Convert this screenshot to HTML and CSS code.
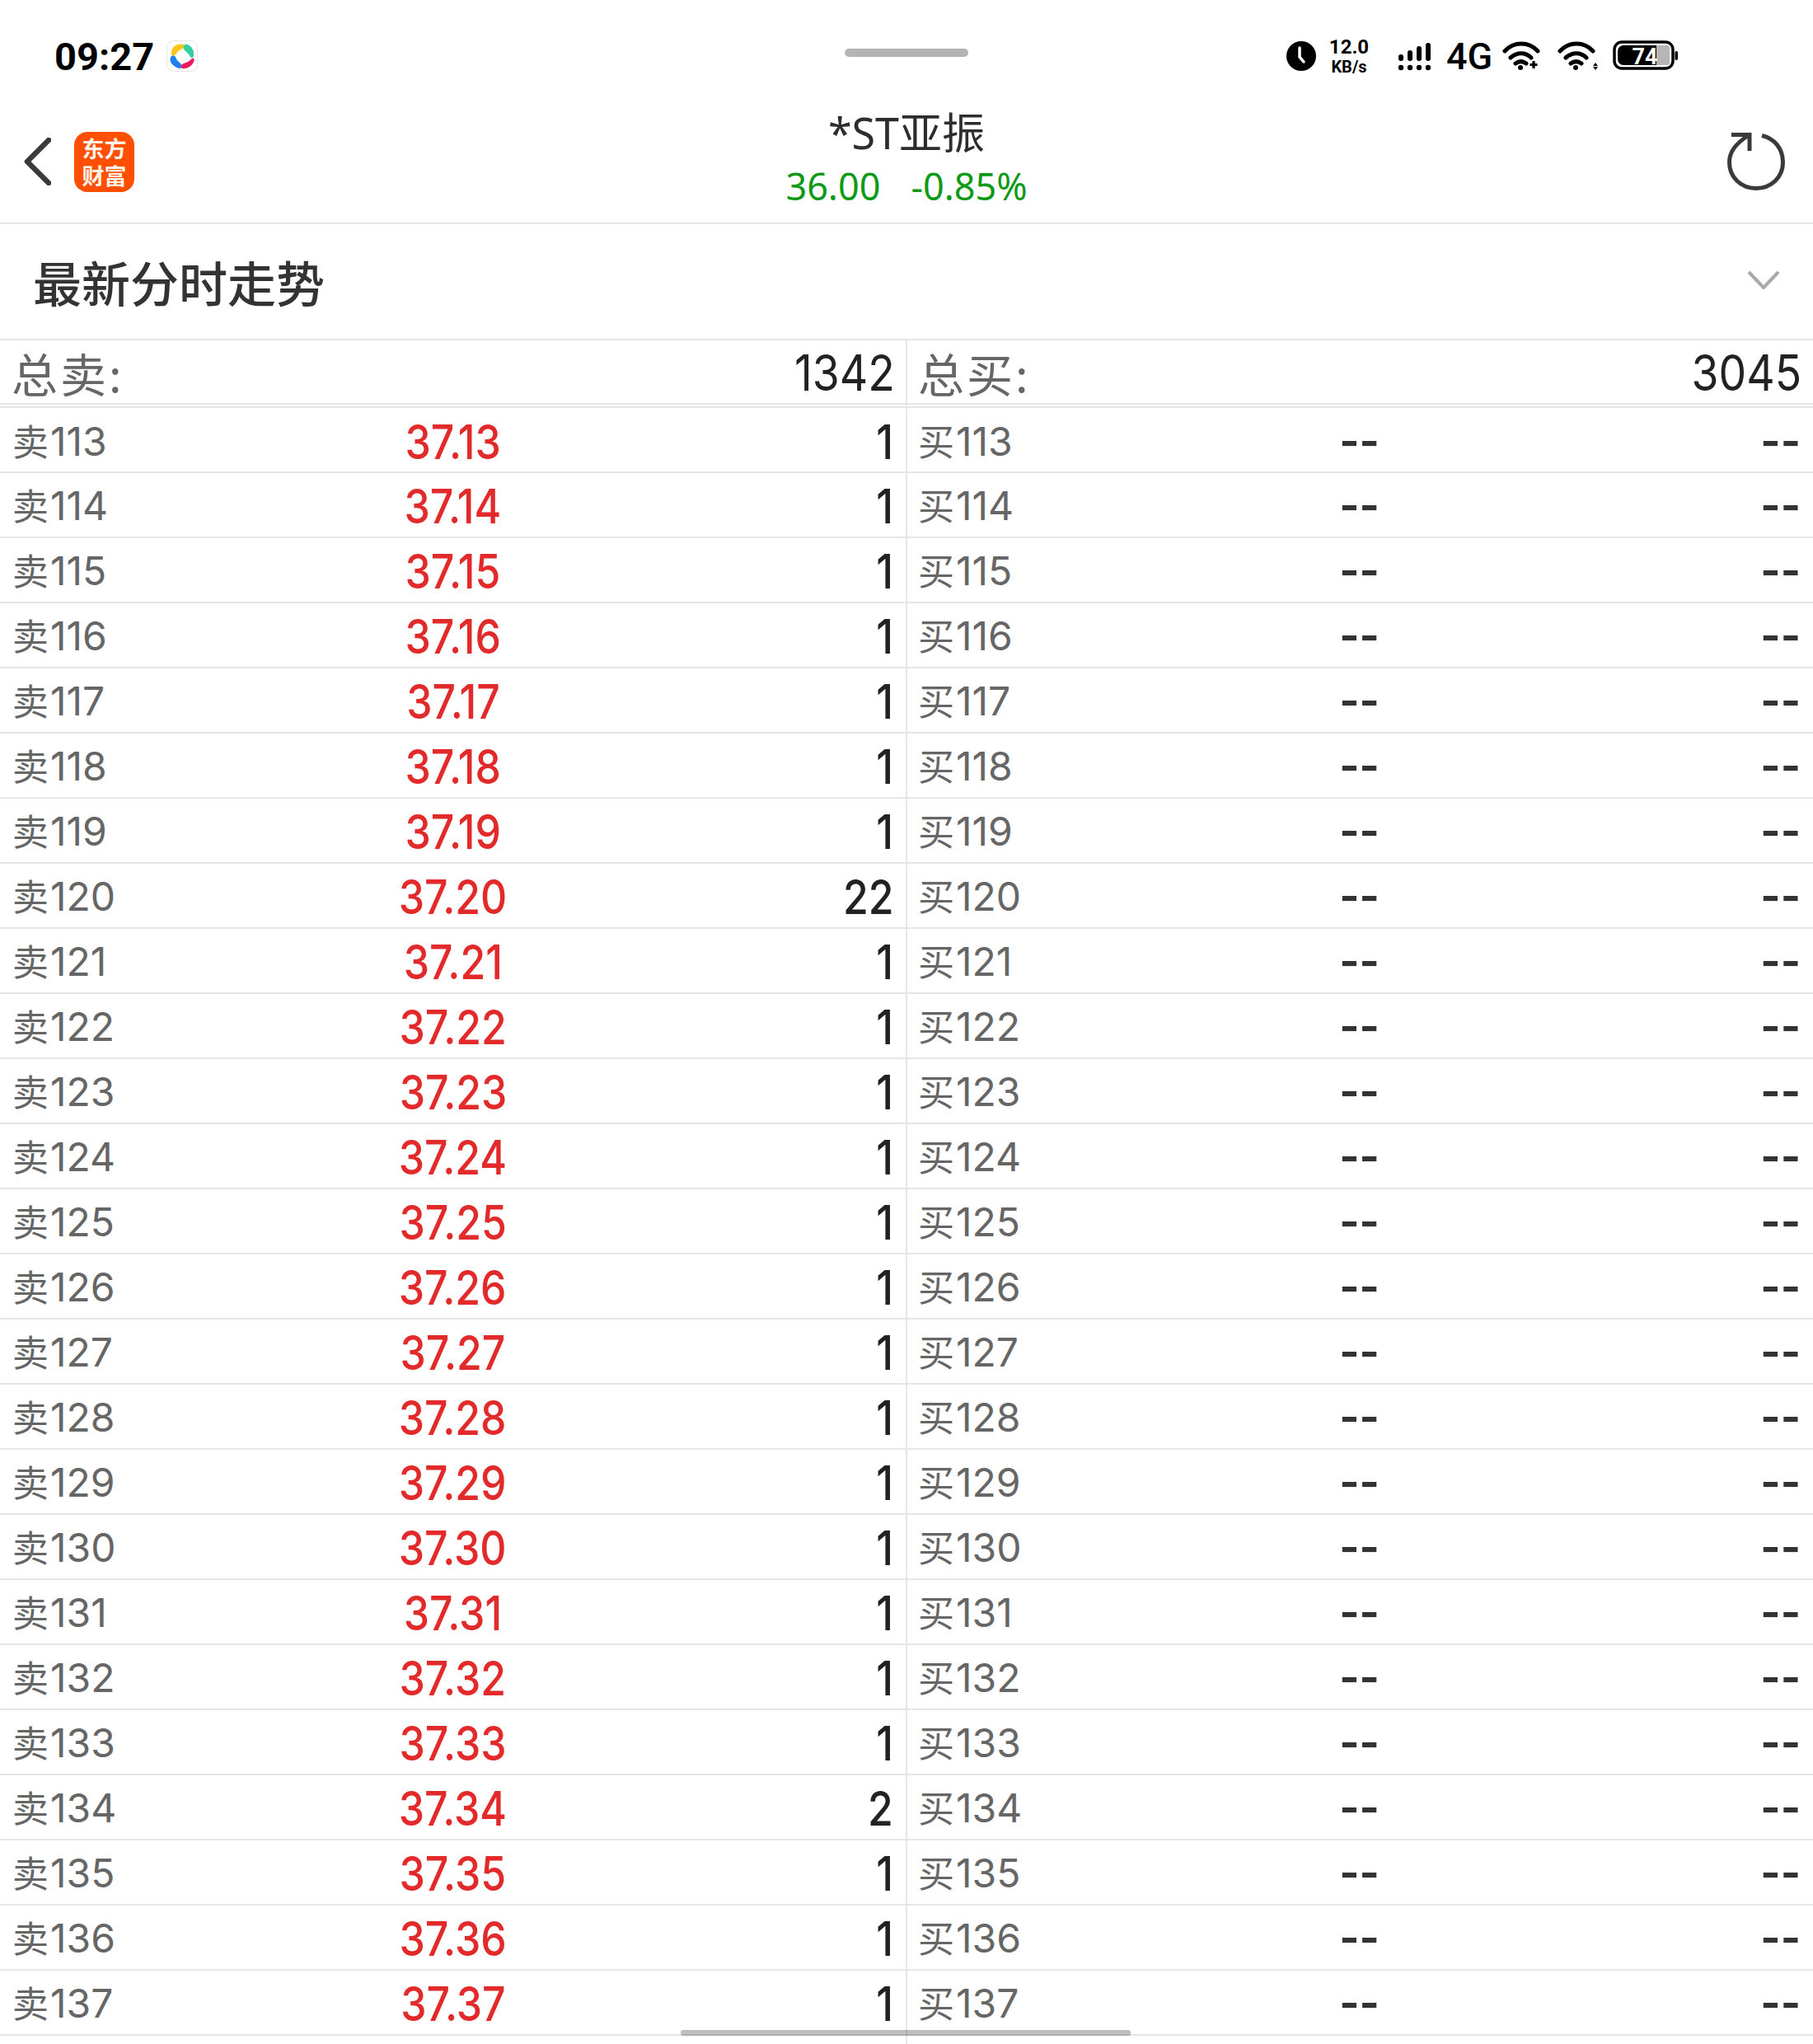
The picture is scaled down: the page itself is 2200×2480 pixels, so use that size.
FILE: index.html
```html
<!DOCTYPE html>
<html lang="zh-CN">
<head>
<meta charset="utf-8">
<title>*ST亚振</title>
<link rel="stylesheet" href="styles.css">
</head>
<body>
<div class="page">
  <header class="status">
    <div class="status-left">
      <span class="time">09:27</span>
      <svg class="appicon" viewBox="0 0 38 38"><rect x=".5" y=".5" width="37" height="37" rx="8" fill="#fff" stroke="#e6e6e6"/><path d="M6 17C5 9 12 3 21 5c2 1 1 4-1 5-4 1-6 3-9 7-2 2-5 2-5 0z" fill="#fbc51c"/><path d="M25 5c5 1 9 7 8 14 0 2-3 3-4 1-2-4-4-5-7-8-3-3-1-8 3-7z" fill="#36cfa4"/><path d="M5 21c1-3 4-3 6-1 1 4 3 5 6 8 3 3 1 7-2 6C9 32 3 27 5 21z" fill="#1f7ff0"/><path d="M31 22c3-1 3 2 2 4-2 5-8 9-14 8-3-2-1-5 2-6 4-1 7-3 10-6z" fill="#f0195f"/></svg>
    </div>
    <div class="handle"></div>
    <div class="status-right">
      <svg class="i-clock" viewBox="0 0 36 36"><circle cx="18" cy="18" r="18" fill="#000"/><path d="M16 8v11l5 6" fill="none" stroke="#fff" stroke-width="3.5" stroke-linecap="round"/></svg>
      <div class="speed"><span class="speed-a">12.0</span><span class="speed-b">KB/s</span></div>
      <svg class="i-signal" viewBox="0 0 40 34" fill="#000"><g stroke="#000" stroke-width="6" stroke-linecap="round"><path d="M4 17v2M15 12v7M26 7v12M37 3v16"/></g><circle cx="4" cy="30" r="3.2"/><circle cx="15" cy="30" r="3.2"/><circle cx="26" cy="30" r="3.2"/><circle cx="37" cy="30" r="3.2"/></svg>
      <span class="net">4G</span>
      <svg class="i-wifi" viewBox="0 0 46 36" fill="none" stroke="#000" stroke-width="5" stroke-linecap="round"><path d="M3 13c11-12 29-12 40 0M10 21c8-7 18-7 25 0M16 28c4-3 9-3 13 0"/><circle cx="22" cy="33" r="3" fill="#000" stroke="none"/><path d="M38 25v9M33.500 29.500h9" stroke-width="3.200" stroke-linecap="butt"/></svg>
      <svg class="i-wifi2" viewBox="0 0 49 36" fill="none" stroke="#000" stroke-width="5" stroke-linecap="round"><path d="M3 13c11-12 29-12 40 0M10 21c8-7 18-7 25 0M16 28c4-3 9-3 13 0"/><circle cx="22" cy="33" r="3" fill="#000" stroke="none"/><path d="M46 27l3 4h-6zM46 36l3-4h-6z" fill="#000" stroke="none"/></svg>
      <svg class="i-batt" viewBox="0 0 79 36"><rect x="2" y="2" width="71" height="32" rx="9" fill="#fff" stroke="#000" stroke-width="3.500"/><path d="M13 6h40v24H13a7 7 0 0 1-7-7V13a7 7 0 0 1 7-7z" fill="#000"/><path d="M53 6h13a3 3 0 0 1 3 3v18a3 3 0 0 1-3 3H53z" fill="#b6b6b6"/><rect x="75.500" y="13" width="3.500" height="11" rx="1.700" fill="#000"/><text x="39" y="28.500" class="batt-text">74</text></svg>
    </div>
  </header>

  <nav class="nav">
    <div class="nav-left">
      <svg class="back" viewBox="0 0 33 58" fill="none"><path d="M30 3L4 29l26 26" stroke="#3a3a3a" stroke-width="6.500" stroke-linecap="round" stroke-linejoin="round"/></svg>
      <div class="logo"><span>东方</span><span>财富</span></div>
    </div>
    <div class="nav-title">
      <div class="stock">*ST亚振</div>
      <div class="quote"><span>36.00</span><span>-0.85%</span></div>
    </div>
    <svg class="refresh" viewBox="0 0 70 70" fill="none" stroke="#3a3a3a" stroke-width="5"><path d="M42 3.500C57 7 67.500 19 67.500 36c0 18-14 31.500-32.500 31.500S2.500 54 2.500 36C2.500 24 9 14 26 3"/><path d="M5 2.500h22V22"/></svg>
  </nav>

  <section class="section">
    <h2 class="section-title">最新分时走势</h2>
    <svg class="down" viewBox="0 0 40 23" fill="none"><path d="M2 2l18 19L38 2" stroke="#a9a9a9" stroke-width="4"/></svg>
  </section>

  <main class="book">
    <div class="side side-sell">
      <div class="head"><span class="head-l">总卖:</span><span class="head-n"><b class="n-h">1342</b></span></div>
      <div class="row"><span class="l">卖<b class="d">113</b></span><span class="p red"><b class="n">37.13</b></span><span class="q"><b class="n n-r">1</b></span></div>
      <div class="row"><span class="l">卖<b class="d">114</b></span><span class="p red"><b class="n">37.14</b></span><span class="q"><b class="n n-r">1</b></span></div>
      <div class="row"><span class="l">卖<b class="d">115</b></span><span class="p red"><b class="n">37.15</b></span><span class="q"><b class="n n-r">1</b></span></div>
      <div class="row"><span class="l">卖<b class="d">116</b></span><span class="p red"><b class="n">37.16</b></span><span class="q"><b class="n n-r">1</b></span></div>
      <div class="row"><span class="l">卖<b class="d">117</b></span><span class="p red"><b class="n">37.17</b></span><span class="q"><b class="n n-r">1</b></span></div>
      <div class="row"><span class="l">卖<b class="d">118</b></span><span class="p red"><b class="n">37.18</b></span><span class="q"><b class="n n-r">1</b></span></div>
      <div class="row"><span class="l">卖<b class="d">119</b></span><span class="p red"><b class="n">37.19</b></span><span class="q"><b class="n n-r">1</b></span></div>
      <div class="row"><span class="l">卖<b class="d">120</b></span><span class="p red"><b class="n">37.20</b></span><span class="q"><b class="n n-r">22</b></span></div>
      <div class="row"><span class="l">卖<b class="d">121</b></span><span class="p red"><b class="n">37.21</b></span><span class="q"><b class="n n-r">1</b></span></div>
      <div class="row"><span class="l">卖<b class="d">122</b></span><span class="p red"><b class="n">37.22</b></span><span class="q"><b class="n n-r">1</b></span></div>
      <div class="row"><span class="l">卖<b class="d">123</b></span><span class="p red"><b class="n">37.23</b></span><span class="q"><b class="n n-r">1</b></span></div>
      <div class="row"><span class="l">卖<b class="d">124</b></span><span class="p red"><b class="n">37.24</b></span><span class="q"><b class="n n-r">1</b></span></div>
      <div class="row"><span class="l">卖<b class="d">125</b></span><span class="p red"><b class="n">37.25</b></span><span class="q"><b class="n n-r">1</b></span></div>
      <div class="row"><span class="l">卖<b class="d">126</b></span><span class="p red"><b class="n">37.26</b></span><span class="q"><b class="n n-r">1</b></span></div>
      <div class="row"><span class="l">卖<b class="d">127</b></span><span class="p red"><b class="n">37.27</b></span><span class="q"><b class="n n-r">1</b></span></div>
      <div class="row"><span class="l">卖<b class="d">128</b></span><span class="p red"><b class="n">37.28</b></span><span class="q"><b class="n n-r">1</b></span></div>
      <div class="row"><span class="l">卖<b class="d">129</b></span><span class="p red"><b class="n">37.29</b></span><span class="q"><b class="n n-r">1</b></span></div>
      <div class="row"><span class="l">卖<b class="d">130</b></span><span class="p red"><b class="n">37.30</b></span><span class="q"><b class="n n-r">1</b></span></div>
      <div class="row"><span class="l">卖<b class="d">131</b></span><span class="p red"><b class="n">37.31</b></span><span class="q"><b class="n n-r">1</b></span></div>
      <div class="row"><span class="l">卖<b class="d">132</b></span><span class="p red"><b class="n">37.32</b></span><span class="q"><b class="n n-r">1</b></span></div>
      <div class="row"><span class="l">卖<b class="d">133</b></span><span class="p red"><b class="n">37.33</b></span><span class="q"><b class="n n-r">1</b></span></div>
      <div class="row"><span class="l">卖<b class="d">134</b></span><span class="p red"><b class="n">37.34</b></span><span class="q"><b class="n n-r">2</b></span></div>
      <div class="row"><span class="l">卖<b class="d">135</b></span><span class="p red"><b class="n">37.35</b></span><span class="q"><b class="n n-r">1</b></span></div>
      <div class="row"><span class="l">卖<b class="d">136</b></span><span class="p red"><b class="n">37.36</b></span><span class="q"><b class="n n-r">1</b></span></div>
      <div class="row"><span class="l">卖<b class="d">137</b></span><span class="p red"><b class="n">37.37</b></span><span class="q"><b class="n n-r">1</b></span></div>
    </div>
    <div class="side side-buy">
      <div class="head"><span class="head-l">总买:</span><span class="head-n"><b class="n-h">3045</b></span></div>
      <div class="row"><span class="l">买<b class="d">113</b></span><span class="p dash">--</span><span class="q dash">--</span></div>
      <div class="row"><span class="l">买<b class="d">114</b></span><span class="p dash">--</span><span class="q dash">--</span></div>
      <div class="row"><span class="l">买<b class="d">115</b></span><span class="p dash">--</span><span class="q dash">--</span></div>
      <div class="row"><span class="l">买<b class="d">116</b></span><span class="p dash">--</span><span class="q dash">--</span></div>
      <div class="row"><span class="l">买<b class="d">117</b></span><span class="p dash">--</span><span class="q dash">--</span></div>
      <div class="row"><span class="l">买<b class="d">118</b></span><span class="p dash">--</span><span class="q dash">--</span></div>
      <div class="row"><span class="l">买<b class="d">119</b></span><span class="p dash">--</span><span class="q dash">--</span></div>
      <div class="row"><span class="l">买<b class="d">120</b></span><span class="p dash">--</span><span class="q dash">--</span></div>
      <div class="row"><span class="l">买<b class="d">121</b></span><span class="p dash">--</span><span class="q dash">--</span></div>
      <div class="row"><span class="l">买<b class="d">122</b></span><span class="p dash">--</span><span class="q dash">--</span></div>
      <div class="row"><span class="l">买<b class="d">123</b></span><span class="p dash">--</span><span class="q dash">--</span></div>
      <div class="row"><span class="l">买<b class="d">124</b></span><span class="p dash">--</span><span class="q dash">--</span></div>
      <div class="row"><span class="l">买<b class="d">125</b></span><span class="p dash">--</span><span class="q dash">--</span></div>
      <div class="row"><span class="l">买<b class="d">126</b></span><span class="p dash">--</span><span class="q dash">--</span></div>
      <div class="row"><span class="l">买<b class="d">127</b></span><span class="p dash">--</span><span class="q dash">--</span></div>
      <div class="row"><span class="l">买<b class="d">128</b></span><span class="p dash">--</span><span class="q dash">--</span></div>
      <div class="row"><span class="l">买<b class="d">129</b></span><span class="p dash">--</span><span class="q dash">--</span></div>
      <div class="row"><span class="l">买<b class="d">130</b></span><span class="p dash">--</span><span class="q dash">--</span></div>
      <div class="row"><span class="l">买<b class="d">131</b></span><span class="p dash">--</span><span class="q dash">--</span></div>
      <div class="row"><span class="l">买<b class="d">132</b></span><span class="p dash">--</span><span class="q dash">--</span></div>
      <div class="row"><span class="l">买<b class="d">133</b></span><span class="p dash">--</span><span class="q dash">--</span></div>
      <div class="row"><span class="l">买<b class="d">134</b></span><span class="p dash">--</span><span class="q dash">--</span></div>
      <div class="row"><span class="l">买<b class="d">135</b></span><span class="p dash">--</span><span class="q dash">--</span></div>
      <div class="row"><span class="l">买<b class="d">136</b></span><span class="p dash">--</span><span class="q dash">--</span></div>
      <div class="row"><span class="l">买<b class="d">137</b></span><span class="p dash">--</span><span class="q dash">--</span></div>
    </div>
  </main>
  <div class="scrollbar"></div>
</div>
</body>
</html>
```
FILE: styles.css
```css
* { box-sizing: border-box; }
html, body { margin: 0; padding: 0; background: #fff; }
.page {
  position: relative;
  width: 2200px;
  height: 2480px;
  overflow: hidden;
  display: flex;
  flex-direction: column;
  font-family: "Inter", "Noto Sans CJK SC", sans-serif;
  color: #333;
}

/* status bar */
.status {
  height: 100px;
  flex: none;
  display: grid;
  grid-template-columns: 1fr auto 1fr;
  align-items: start;
}
.status-left {
  padding: 44px 0 0 66px;
  display: flex;
  align-items: center;
  gap: 15px;
  height: 92px;
}
.time {
  font: 700 47px/1 "Roboto", sans-serif;
  color: #000;
}
.appicon { width: 38px; height: 38px; flex: none; }
.handle {
  width: 150px;
  height: 10px;
  margin-top: 59px;
  border-radius: 5px;
  background: #b4b4b4;
}
.status-right {
  justify-self: end;
  margin-right: 164px;
  padding-top: 47px;
  height: 92px;
  display: flex;
  align-items: flex-start;
}
.i-clock { width: 36px; height: 36px; margin-top: 3px; }
.speed {
  margin-left: 17px;
  width: 46px;
  display: flex;
  flex-direction: column;
  align-items: center;
  font-family: "Roboto", sans-serif;
  font-weight: 700;
  color: #000;
}
.speed-a { font-size: 24px; line-height: 21px; }
.speed-b { font-size: 20px; line-height: 20px; margin-top: 3px; white-space: nowrap; }
.i-signal { width: 40px; height: 34px; margin: 5px 0 0 36px; }
.net {
  margin: 2px 0 0 19px;
  width: 53px;
  font: 500 45px/40px "Roboto", sans-serif;
  color: #000;
  white-space: nowrap;
}
.i-wifi { width: 46px; height: 36px; margin: 2px 0 0 15px; }
.i-wifi2 { width: 49px; height: 36px; margin: 2px 0 0 21px; }
.i-batt { width: 79px; height: 36px; margin: 2px 0 0 18px; }
.batt-text {
  font: 700 27px "Roboto", sans-serif;
  fill: #fff;
  text-anchor: middle;
}

/* nav */
.nav {
  height: 172px;
  flex: none;
  padding-top: 22px;
  border-bottom: 2px solid #e6e6e6;
  display: grid;
  grid-template-columns: 1fr auto 1fr;
  align-items: center;
}
.nav-left { display: flex; align-items: center; gap: 28px; padding-left: 29px; }
.back { width: 33px; height: 58px; flex: none; }
.logo {
  width: 73px;
  height: 73px;
  border-radius: 16px;
  background: #fe4f02;
  color: #fff4ea;
  display: flex;
  flex-direction: column;
  align-items: center;
  justify-content: center;
  font: 700 27px/33px "Noto Sans CJK SC", sans-serif;
}
.nav-title { display: flex; flex-direction: column; align-items: center; margin-top: -8px; }
.stock { font: 400 52px/66px "Noto Sans", "Noto Sans CJK SC", sans-serif; color: #2d2d2d; }
.quote {
  display: flex;
  gap: 37px;
  font: 400 45px/63px "Noto Sans", sans-serif;
  color: #0e9a17;
}
.refresh { width: 70px; height: 70px; justify-self: end; margin: 0 34px 0 0; }

/* section */
.section {
  height: 141px;
  flex: none;
  border-bottom: 2px solid #e6e6e6;
  display: flex;
  align-items: center;
  justify-content: space-between;
  padding: 0 40px;
}
.section-title {
  margin: 0;
  font: 500 59px/1 "Noto Sans CJK SC", sans-serif;
  color: #333;
}
.down { width: 40px; height: 23px; margin-top: -4px; }

/* book */
.book {
  flex: 1;
  display: grid;
  grid-template-columns: 1099px 1101px;
}
.side-buy { border-left: 2px solid #e6e6e6; }
.head {
  height: 78px;
  border-bottom: 2px solid #e6e6e6;
  display: flex;
  align-items: center;
  justify-content: space-between;
  padding: 2px 13px 0 14px;
}
.side-buy .head { padding-left: 13px; padding-right: 14px; }
.head-l { font: 400 56px/1 "Noto Sans CJK SC", sans-serif; letter-spacing: 3px; color: #666; }
.head-n { font-size: 60px; color: #222; line-height: 1; }
.n-h {
  display: inline-block;
  font-weight: 400;
  transform: scaleX(.89);
  transform-origin: right center;
}
.row {
  height: 79px;
  border-bottom: 2px solid #e6e6e6;
  display: grid;
  grid-template-columns: 1fr 1fr 1fr;
  align-items: center;
  padding: 3px 15px 0 15px;
}
.head + .row { height: 81px; padding-top: 5px; border-top: 2px solid #e6e6e6; margin-top: 2px; }
.side-buy .row { padding-left: 13px; padding-right: 15px; }
.l { font: 400 44px/1 "Noto Sans CJK SC", sans-serif; color: #666; white-space: nowrap; }
.d {
  display: inline-block;
  margin-left: 2px;
  font: 400 48px/1 "Inter", sans-serif;
}
.p { text-align: center; font-size: 58px; line-height: 1; }
.q { text-align: right; font-size: 58px; line-height: 1; color: #222; }
.red { color: #e22a2a; }
.n {
  display: inline-block;
  font-weight: 500;
  transform: scaleX(.86);
}
.n-r { transform-origin: right center; }
.dash { font-size: 52px; font-weight: 700; color: #333; }

.scrollbar {
  position: absolute;
  left: 826px;
  top: 2463px;
  width: 546px;
  height: 7px;
  border-radius: 3px;
  background: rgba(0, 0, 0, .25);
}
```
